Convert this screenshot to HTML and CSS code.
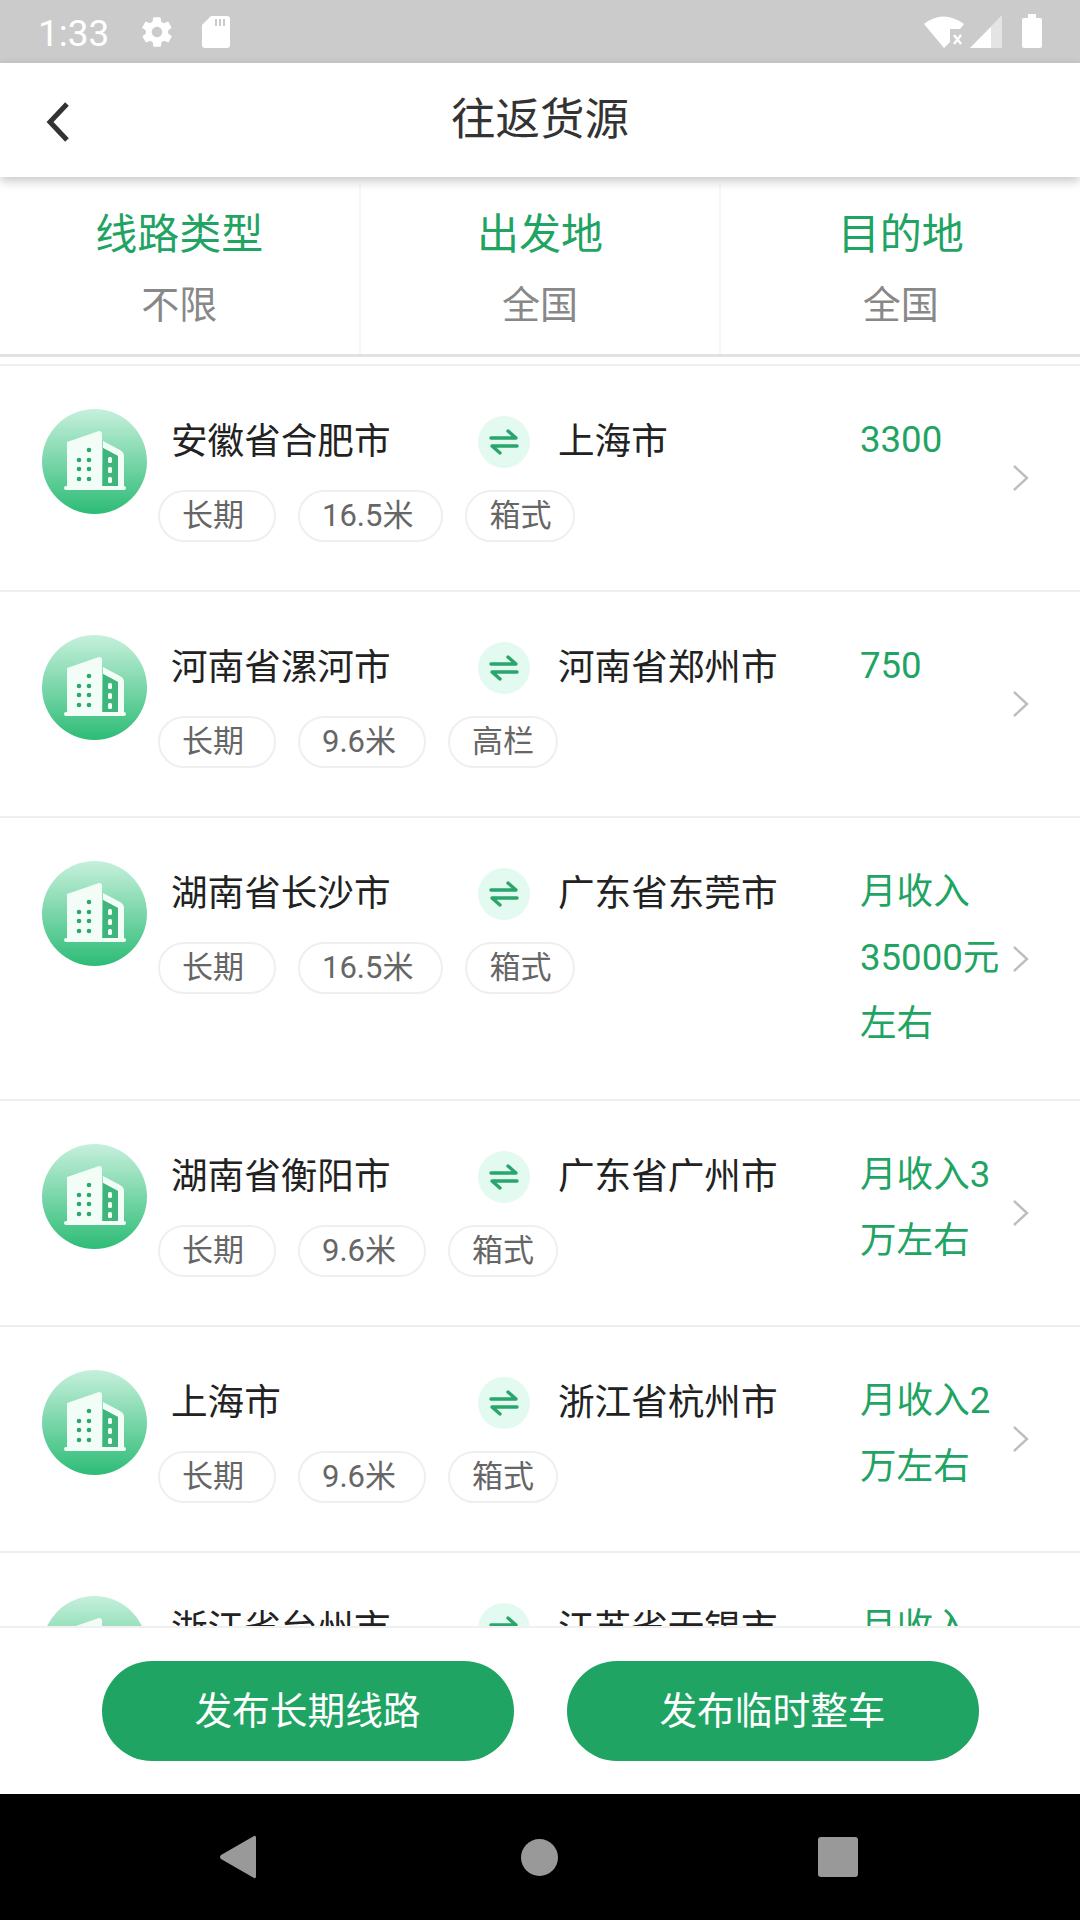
FILE: index.html
```html
<!DOCTYPE html>
<html lang="zh-CN">
<head>
    <meta charset="UTF-8">
    <meta name="viewport" content="width=device-width, initial-scale=1.0">
    <title>往返货源</title>
    <link rel="stylesheet" href="styles.css">
</head>
<body>
    <svg class="defs" width="0" height="0">
        <defs>
            <linearGradient id="avatar-fill" x1="0" y1="0" x2="0" y2="1">
                <stop offset="0" stop-color="#c6f0dc"/>
                <stop offset="1" stop-color="#2dbc76"/>
            </linearGradient>
            <symbol id="building" viewBox="0 0 105 105">
                <circle cx="52.5" cy="52.5" r="52.5" fill="url(#avatar-fill)"/>
                <path d="M25 33 L57 22 Q60 22 60 25 V78 H25 Z" fill="#f3fdf8"/>
                <path d="M61 32 L78 41 Q82 43 82 47 V78 H76 V47 L61 39 Z" fill="#f3fdf8"/>
                <path d="M61 39 L76 47 V78 H61 Z" fill="#3fb57c"/>
                <rect x="22" y="77" width="62" height="4" rx="2" fill="#f3fdf8"/>
                <g fill="#2ea76c">
                    <circle cx="37" cy="51" r="2.3"/><circle cx="37" cy="60" r="2.3"/><circle cx="37" cy="70" r="2.3"/>
                    <circle cx="47" cy="41" r="2.3"/><circle cx="47" cy="51" r="2.3"/><circle cx="47" cy="60" r="2.3"/><circle cx="47" cy="70" r="2.3"/>
                </g>
                <g fill="#f3fdf8">
                    <rect x="66" y="48" width="4" height="6" rx="1.5"/><rect x="66" y="58" width="4" height="6" rx="1.5"/><rect x="66" y="68" width="4" height="6" rx="1.5"/>
                </g>
            </symbol>
            <symbol id="swap" viewBox="0 0 52 52">
                <circle cx="26" cy="26" r="26" fill="#e3faf0"/>
                <path d="M13 22 H38 L30 15 M39 30 H14 L22 37" fill="none" stroke="#2aa56b" stroke-width="3.4" stroke-linecap="round" stroke-linejoin="round"/>
            </symbol>
            <symbol id="chevron" viewBox="0 0 18 28">
                <path d="M2 2 L15 14 L2 26" fill="none" stroke="#bdbdbd" stroke-width="2.4"/>
            </symbol>
        </defs>
    </svg>

    <div class="status-bar">
        <div class="status-left">
            <span class="clock">1:33</span>
            <svg class="status-icon" width="36" height="36" viewBox="0 0 24 24"><path fill="#fff" d="M19.4 13c0-.3.1-.6.1-1s0-.7-.1-1l2.1-1.600c.2-.2.2-.4.1-.6l-2-3.500c-.1-.2-.4-.3-.6-.2l-2.500 1c-.5-.4-1.100-.7-1.700-1l-.4-2.600c0-.2-.2-.4-.5-.4h-4c-.3 0-.5.2-.5.4l-.4 2.600c-.6.3-1.200.6-1.700 1l-2.500-1c-.2-.1-.5 0-.6.2l-2 3.500c-.1.2-.1.4.1.6L4.600 11c0 .3-.1.6-.1 1s0 .7.1 1l-2.100 1.600c-.2.2-.2.4-.1.6l2 3.500c.1.2.4.3.6.2l2.500-1c.5.4 1.100.7 1.700 1l.4 2.600c0 .2.2.4.5.4h4c.3 0 .5-.2.5-.4l.4-2.600c.6-.3 1.200-.6 1.700-1l2.500 1c.2.1.5 0 .6-.2l2-3.500c.1-.2.1-.4-.1-.6L19.400 13zM12 15.500c-1.900 0-3.500-1.600-3.500-3.500s1.600-3.500 3.500-3.500 3.500 1.600 3.500 3.500-1.600 3.500-3.500 3.500z"/></svg>
            <svg class="status-icon" width="30" height="34" viewBox="0 0 30 34"><path fill="#fff" d="M10 1 H26 Q29 1 29 4 V30 Q29 33 26 33 H4 Q1 33 1 30 V10 Z"/><path fill="#cbcbcb" d="M14 4h2v7h-2zM18 4h2v7h-2zM22 4h2v7h-2z"/></svg>
        </div>
        <div class="status-right">
            <svg width="42" height="34" viewBox="0 0 42 34"><path fill="#fff" d="M1 9 Q20 -6 41 9 L37 14 H27 V27 L21 33 Z"/><path d="M31 20 L38 29 M38 20 L31 29" stroke="#fff" stroke-width="2.400"/></svg>
            <svg width="32" height="34" viewBox="0 0 32 34"><path fill="#e4e4e4" d="M32 0 V33 H0 Z"/><path fill="#fff" d="M21 12 V33 H0 Z"/></svg>
            <div class="battery"></div>
        </div>
    </div>

    <header class="top-bar">
        <svg class="back" width="26" height="40" viewBox="0 0 26 40"><path d="M22 2 L5 20 L22 38" fill="none" stroke="#333" stroke-width="5"/></svg>
        <h1>往返货源</h1>
    </header>

    <div class="filters">
        <div class="filter"><div class="filter-label">线路类型</div><div class="filter-value">不限</div></div>
        <div class="filter"><div class="filter-label">出发地</div><div class="filter-value">全国</div></div>
        <div class="filter"><div class="filter-label">目的地</div><div class="filter-value">全国</div></div>
    </div>

    <div class="list">
        <div class="row">
            <svg class="avatar"><use href="#building"/></svg>
            <div class="info">
                <div class="route">
                    <span class="from">安徽省合肥市</span>
                    <svg class="swap"><use href="#swap"/></svg>
                    <span class="to">上海市</span>
                </div>
                <div class="tags"><span class="tag">长期</span><span class="tag">16.5米</span><span class="tag">箱式</span></div>
            </div>
            <div class="price">3300</div>
            <svg class="arrow"><use href="#chevron"/></svg>
        </div>
        <div class="row">
            <svg class="avatar"><use href="#building"/></svg>
            <div class="info">
                <div class="route">
                    <span class="from">河南省漯河市</span>
                    <svg class="swap"><use href="#swap"/></svg>
                    <span class="to">河南省郑州市</span>
                </div>
                <div class="tags"><span class="tag">长期</span><span class="tag">9.6米</span><span class="tag">高栏</span></div>
            </div>
            <div class="price">750</div>
            <svg class="arrow"><use href="#chevron"/></svg>
        </div>
        <div class="row">
            <svg class="avatar"><use href="#building"/></svg>
            <div class="info">
                <div class="route">
                    <span class="from">湖南省长沙市</span>
                    <svg class="swap"><use href="#swap"/></svg>
                    <span class="to">广东省东莞市</span>
                </div>
                <div class="tags"><span class="tag">长期</span><span class="tag">16.5米</span><span class="tag">箱式</span></div>
            </div>
            <div class="price">月收入35000元左右</div>
            <svg class="arrow"><use href="#chevron"/></svg>
        </div>
        <div class="row">
            <svg class="avatar"><use href="#building"/></svg>
            <div class="info">
                <div class="route">
                    <span class="from">湖南省衡阳市</span>
                    <svg class="swap"><use href="#swap"/></svg>
                    <span class="to">广东省广州市</span>
                </div>
                <div class="tags"><span class="tag">长期</span><span class="tag">9.6米</span><span class="tag">箱式</span></div>
            </div>
            <div class="price">月收入3万左右</div>
            <svg class="arrow"><use href="#chevron"/></svg>
        </div>
        <div class="row">
            <svg class="avatar"><use href="#building"/></svg>
            <div class="info">
                <div class="route">
                    <span class="from">上海市</span>
                    <svg class="swap"><use href="#swap"/></svg>
                    <span class="to">浙江省杭州市</span>
                </div>
                <div class="tags"><span class="tag">长期</span><span class="tag">9.6米</span><span class="tag">箱式</span></div>
            </div>
            <div class="price">月收入2万左右</div>
            <svg class="arrow"><use href="#chevron"/></svg>
        </div>
        <div class="row">
            <svg class="avatar"><use href="#building"/></svg>
            <div class="info">
                <div class="route">
                    <span class="from">浙江省台州市</span>
                    <svg class="swap"><use href="#swap"/></svg>
                    <span class="to">江苏省无锡市</span>
                </div>
            </div>
            <div class="price">月收入</div>
        </div>
    </div>

    <div class="actions">
        <button class="action">发布长期线路</button>
        <button class="action">发布临时整车</button>
    </div>

    <div class="nav-bar">
        <svg width="38" height="44" viewBox="0 0 38 44"><path fill="#999" d="M35 1 Q37 0 37 3 V41 Q37 44 35 43 L2 24 Q0 22 2 20 Z"/></svg>
        <div class="nav-home"></div>
        <div class="nav-recent"></div>
    </div>
</body>
</html>
```

FILE: styles.css
```css
* {
    box-sizing: border-box;
}

html, body {
    margin: 0;
    height: 100%;
}

body {
    width: 1080px;
    height: 1920px;
    display: flex;
    flex-direction: column;
    overflow: hidden;
    background: #fff;
    font-family: Roboto, "Noto Sans CJK SC", sans-serif;
}

.defs {
    position: absolute;
}

.status-bar {
    height: 63px;
    flex: none;
    display: flex;
    justify-content: space-between;
    align-items: center;
    padding: 0 38px;
    background: #cbcbcb;
    color: #fff;
}

.status-left, .status-right {
    display: flex;
    align-items: center;
}

.clock {
    font-size: 37px;
    padding-top: 3px;
    width: 101px;
}

.status-left .status-icon {
    margin-right: 26px;
}

.status-right {
    gap: 5px;
}

.battery {
    width: 20px;
    height: 30px;
    margin: 3px 0 0 15px;
    border-radius: 2px;
    background: #fff;
    position: relative;
}

.battery::before {
    content: "";
    position: absolute;
    top: -4px;
    left: 6px;
    width: 8px;
    height: 4px;
    background: #fff;
}

.top-bar {
    height: 114px;
    flex: none;
    position: relative;
    z-index: 2;
    display: flex;
    align-items: center;
    justify-content: center;
    background: #fff;
    box-shadow: 0 4px 10px rgba(0, 0, 0, 0.22);
}

.top-bar h1 {
    margin: 0 0 10px;
    font-size: 44.5px;
    font-weight: 400;
    color: #333;
}

.back {
    position: absolute;
    left: 45px;
    top: 39px;
}

.filters {
    height: 180px;
    flex: none;
    display: flex;
    border-bottom: 3px solid #e2e2e2;
}

.filter {
    flex: 1;
    margin-top: 8px;
    padding-top: 19px;
    text-align: center;
    border-right: 2px solid #f6f6f6;
}

.filter:last-child {
    border-right: 0;
}

.filter-label {
    height: 62px;
    line-height: 62px;
    font-size: 42px;
    color: #1fa463;
}

.filter-value {
    height: 78px;
    line-height: 78px;
    font-size: 38px;
    color: #888;
}

.list {
    flex: 1;
    min-height: 0;
    overflow: hidden;
    padding-top: 7px;
    border-bottom: 2px solid #f0f0f0;
}

.row {
    min-height: 226px;
    display: flex;
    padding: 43px 0 0 42px;
    position: relative;
    border-top: 2px solid #eeeeee;
}

.avatar {
    width: 105px;
    height: 105px;
    flex: none;
}

.info {
    width: 713px;
    flex: none;
    padding-left: 24px;
}

.route {
    height: 58px;
    display: flex;
    align-items: center;
    font-size: 36.6px;
    color: #222;
}

.from {
    width: 307px;
}

.swap {
    width: 52px;
    height: 52px;
    margin-top: 8px;
    flex: none;
}

.to {
    margin-left: 28px;
}

.tags {
    display: flex;
    gap: 22px;
    margin: 23px 0 0 -13px;
}

.tag {
    height: 52px;
    line-height: 48px;
    padding: 0 28px 0 22px;
    border: 2px solid #efefef;
    border-radius: 26px;
    font-size: 31px;
    color: #666;
}

.tag:first-child {
    padding-right: 30px;
}

.tag:last-child {
    padding-right: 22px;
}

.price {
    width: 145px;
    margin-bottom: 42px;
    line-height: 66px;
    margin-top: -2px;
    font-size: 36.6px;
    color: #1fa463;
}

.arrow {
    position: absolute;
    left: 1012px;
    top: 50%;
    width: 18px;
    height: 28px;
    margin-top: -14px;
}

.actions {
    height: 166px;
    flex: none;
    display: flex;
    justify-content: center;
    align-items: center;
    gap: 53px;
}

.action {
    width: 412px;
    height: 100px;
    padding-bottom: 9px;
    border: 0;
    border-radius: 50px;
    background: #1fa463;
    color: #fff;
    font-family: inherit;
    font-size: 37.7px;
}

.nav-bar {
    height: 126px;
    flex: none;
    display: flex;
    align-items: center;
    padding-left: 219px;
    background: #000;
}

.nav-home {
    width: 37px;
    height: 37px;
    margin-left: 264px;
    border-radius: 50%;
    background: #999;
}

.nav-recent {
    width: 40px;
    height: 40px;
    margin-left: 260px;
    border-radius: 3px;
    background: #999;
}
```
